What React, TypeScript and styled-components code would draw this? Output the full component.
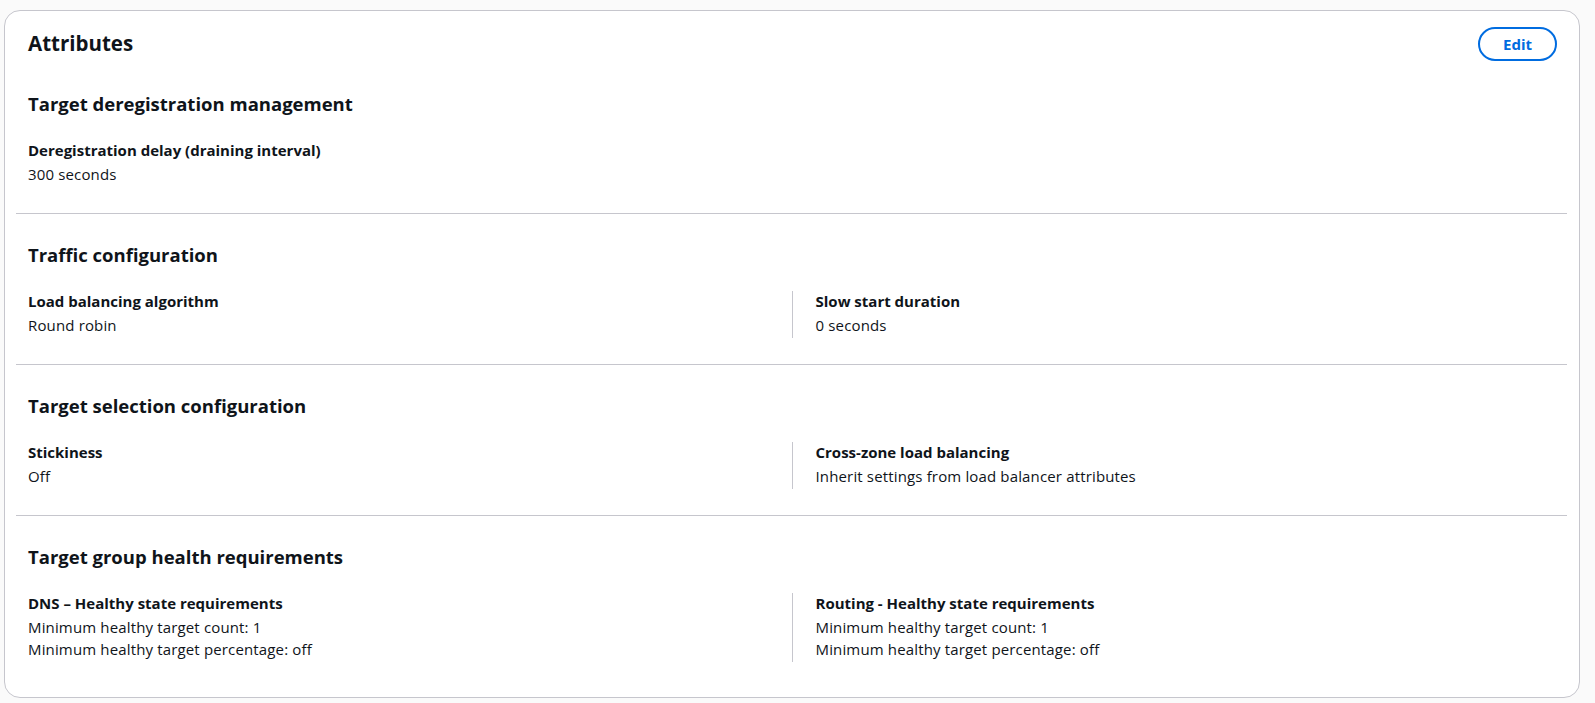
import React from "react";
import styled, { createGlobalStyle } from "styled-components";

const GlobalStyle = createGlobalStyle`
  html, body {
    margin: 0;
    padding: 0;
    background: #fafafa;
  }
  body {
    font-family: "Open Sans", "Noto Sans", Arial, sans-serif;
    color: #0f141a;
    -webkit-font-smoothing: antialiased;
  }
`;

const Page = styled.div`
  padding: 10px 15px 5px 4px;
`;

const Card = styled.div`
  background: #ffffff;
  border: 1px solid #c6c6cd;
  border-radius: 16px;
  padding: 12px 12px 11px 11px;
`;

const Header = styled.div`
  display: flex;
  align-items: center;
  justify-content: space-between;
  padding: 4px 10px 2px 12px;
`;

const Title = styled.h2`
  margin: 0 0 2px 0;
  font-size: 20.5px;
  line-height: 24px;
  font-weight: 700;
`;

const EditButton = styled.button`
  font-family: inherit;
  font-size: 15px;
  font-weight: 700;
  color: #006ce0;
  background: #ffffff;
  border: 2px solid #006ce0;
  border-radius: 20px;
  height: 34px;
  width: 79px;
  cursor: pointer;
`;

const Section = styled.section<{ $last?: boolean }>`
  padding: 30px 12px ${({ $last }) => ($last ? "24px" : "26px")} 12px;
  border-bottom: ${({ $last }) => ($last ? "none" : "1px solid #c6c6cd")};
`;

const SectionTitle = styled.h3`
  margin: 0 0 25px 0;
  font-size: 18.5px;
  line-height: 22px;
  font-weight: 700;
`;

const Columns = styled.div<{ $count: number }>`
  display: grid;
  grid-template-columns: repeat(${({ $count }) => $count}, 1fr);
`;

const Column = styled.div<{ $divided?: boolean }>`
  padding-bottom: 2px;
  ${({ $divided }) =>
    $divided ? "border-left: 1px solid #c6c6cd; padding-left: 23px;" : ""}
`;

const Label = styled.div`
  font-size: 15px;
  line-height: 21px;
  font-weight: 700;
  margin-bottom: 2px;
`;

const Value = styled.div`
  font-size: 15px;
  line-height: 22px;
  letter-spacing: 0.15px;
`;

type Item = { label: string; values: string[] };
type Group = { title: string; items: Item[] };

const groups: Group[] = [
  {
    title: "Target deregistration management",
    items: [
      { label: "Deregistration delay (draining interval)", values: ["300 seconds"] },
    ],
  },
  {
    title: "Traffic configuration",
    items: [
      { label: "Load balancing algorithm", values: ["Round robin"] },
      { label: "Slow start duration", values: ["0 seconds"] },
    ],
  },
  {
    title: "Target selection configuration",
    items: [
      { label: "Stickiness", values: ["Off"] },
      {
        label: "Cross-zone load balancing",
        values: ["Inherit settings from load balancer attributes"],
      },
    ],
  },
  {
    title: "Target group health requirements",
    items: [
      {
        label: "DNS – Healthy state requirements",
        values: [
          "Minimum healthy target count: 1",
          "Minimum healthy target percentage: off",
        ],
      },
      {
        label: "Routing - Healthy state requirements",
        values: [
          "Minimum healthy target count: 1",
          "Minimum healthy target percentage: off",
        ],
      },
    ],
  },
];

const App: React.FC = () => {
  return (
    <>
      <GlobalStyle />
      <Page>
        <Card>
          <Header>
            <Title>Attributes</Title>
            <EditButton>Edit</EditButton>
          </Header>
          {groups.map((group, gi) => (
            <Section key={group.title} $last={gi === groups.length - 1}>
              <SectionTitle>{group.title}</SectionTitle>
              <Columns $count={group.items.length === 1 ? 1 : 2}>
                {group.items.map((item, ii) => (
                  <Column key={item.label} $divided={ii > 0}>
                    <Label>{item.label}</Label>
                    {item.values.map((v) => (
                      <Value key={v}>{v}</Value>
                    ))}
                  </Column>
                ))}
              </Columns>
            </Section>
          ))}
        </Card>
      </Page>
    </>
  );
};

export default App;
